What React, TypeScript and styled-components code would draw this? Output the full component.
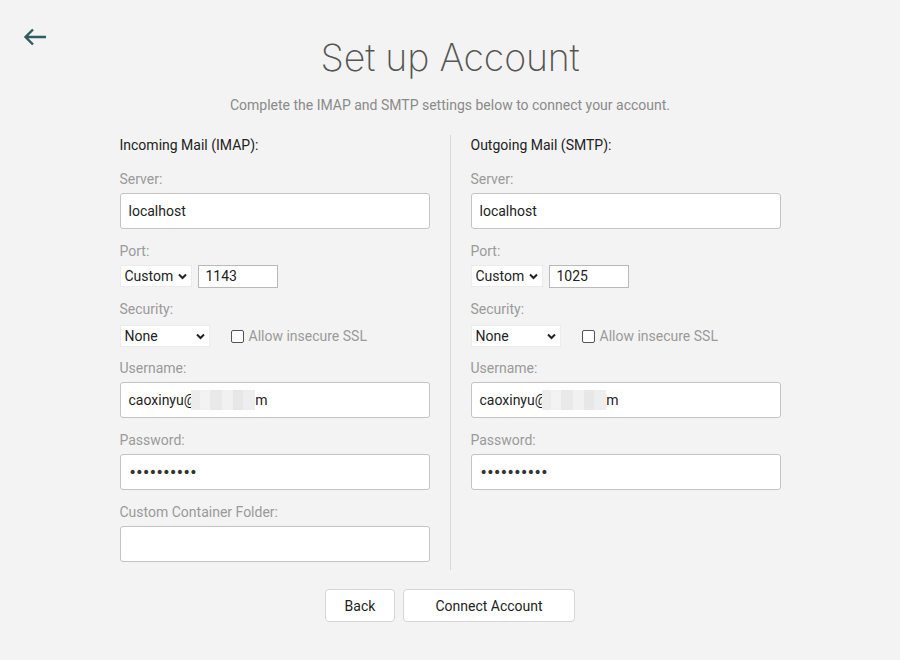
import React from "react";
import styled, { createGlobalStyle } from "styled-components";

const Global = createGlobalStyle`
  html, body { margin: 0; padding: 0; background: #f3f3f3; }
  body { font-family: Roboto, "Liberation Sans", sans-serif; -webkit-font-smoothing: antialiased; }
  * { box-sizing: border-box; }
`;

const Page = styled.div`
  position: relative;
  width: 900px;
  height: 660px;
  background: #f3f3f3;
  display: flex;
  flex-direction: column;
  align-items: center;
`;

const BackArrow = styled.button`
  position: absolute;
  left: 21px;
  top: 26px;
  width: 28px;
  height: 22px;
  padding: 0;
  border: 0;
  background: transparent;
  display: flex;
  align-items: center;
  justify-content: center;
  cursor: pointer;
`;

const Title = styled.h1`
  margin: 36px 0 0;
  font-family: Inter, Roboto, sans-serif;
  font-weight: 200;
  font-size: 37.5px;
  line-height: 44px;
  color: #555;
  letter-spacing: -0.2px;
`;

const Subtitle = styled.p`
  margin: 15px 0 0;
  font-size: 14px;
  line-height: 20px;
  color: #8a8a8a;
`;

const Columns = styled.div`
  margin-top: 20px;
  display: flex;
`;

const Column = styled.div<{ $side: "left" | "right" }>`
  width: ${(p) => (p.$side === "left" ? 331 : 330)}px;
  padding: ${(p) => (p.$side === "left" ? "0 21px 8px 0" : "0 0 8px 20px")};
  border-right: ${(p) => (p.$side === "left" ? "1px solid #d9d9d9" : "none")};
  display: flex;
  flex-direction: column;
`;

const Heading = styled.div`
  font-size: 14px;
  line-height: 20px;
  color: #222;
  margin-bottom: 2px;
`;

const Field = styled.div<{ $mt?: number }>`
  margin-top: ${(p) => p.$mt ?? 12}px;
  display: flex;
  flex-direction: column;
`;

const Label = styled.label`
  font-size: 14px;
  line-height: 20px;
  color: #9a9a9a;
  margin-bottom: 4px;
`;

const TextInput = styled.input`
  width: 310px;
  height: 36px;
  padding: 0 8px;
  border: 1px solid #c4c4c4;
  border-radius: 3px;
  background: #fff;
  font-family: Roboto, "Liberation Sans", sans-serif;
  font-size: 14px;
  color: #222;
  outline: none;
  &[type="password"] {
    font-family: "DejaVu Sans", sans-serif;
    font-size: 14px;
    letter-spacing: -1.5px;
    color: #333;
  }
`;

const UserBox = styled.div`
  width: 310px;
  height: 36px;
  padding: 0 8px;
  border: 1px solid #c4c4c4;
  border-radius: 3px;
  background: #fff;
  font-size: 14px;
  color: #222;
  display: flex;
  align-items: center;
`;

const Redacted = styled.span`
  display: inline-block;
  width: 64px;
  height: 20px;
  margin-left: -5px;
  background: linear-gradient(
    90deg,
    #ececec 0 14%,
    #f3f3f3 14% 30%,
    #e9e9e9 30% 48%,
    #f1f1f1 48% 66%,
    #e7e7e7 66% 82%,
    #eeeeee 82% 100%
  );
`;

const Row = styled.div<{ $gap: number; $mt?: number }>`
  display: flex;
  align-items: center;
  gap: ${(p) => p.$gap}px;
  height: 22px;
  margin-top: ${(p) => p.$mt ?? 0}px;
`;

const SelectWrap = styled.div<{ $w: number }>`
  position: relative;
  width: ${(p) => p.$w}px;
  height: 22px;
`;

const Select = styled.select`
  appearance: none;
  -webkit-appearance: none;
  width: 100%;
  height: 100%;
  border: 1px solid #ececec;
  border-radius: 0;
  background: #fff;
  padding: 0 0 0 4px;
  font-family: Roboto, "Liberation Sans", sans-serif;
  font-size: 14px;
  color: #222;
  outline: none;
`;

const Chevron = styled.svg`
  position: absolute;
  right: 5px;
  top: 8px;
  pointer-events: none;
`;

const PortInput = styled.input`
  width: 80px;
  height: 23px;
  padding: 0 7px;
  border: 1px solid #b9b9b9;
  border-radius: 0;
  background: #fff;
  font-family: Roboto, "Liberation Sans", sans-serif;
  font-size: 14px;
  color: #222;
  outline: none;
`;

const CheckLabel = styled.label`
  display: flex;
  align-items: center;
  gap: 5px;
  font-size: 14px;
  color: #9a9a9a;
`;

const Check = styled.input`
  appearance: none;
  -webkit-appearance: none;
  width: 13px;
  height: 13px;
  margin: 0;
  border: 1px solid #555;
  border-radius: 2px;
  background: #fff;
`;

const Buttons = styled.div`
  margin-top: 19px;
  display: flex;
  gap: 8px;
`;

const Button = styled.button<{ $w: number }>`
  width: ${(p) => p.$w}px;
  height: 33px;
  border: 1px solid #d6d6d6;
  border-radius: 4px;
  background: #fff;
  font-family: Roboto, "Liberation Sans", sans-serif;
  font-size: 14px;
  color: #222;
  cursor: pointer;
`;

const ChevronIcon = () => (
  <Chevron width="9" height="7" viewBox="0 0 9 7">
    <path d="M1 1.5 L4.5 5 L8 1.5" fill="none" stroke="#222" strokeWidth="2" />
  </Chevron>
);

type ColProps = {
  side: "left" | "right";
  title: string;
  port: string;
  showFolder?: boolean;
};

const MailColumn = ({ side, title, port, showFolder }: ColProps) => (
  <Column $side={side}>
    <Heading>{title}</Heading>
    <Field>
      <Label>Server:</Label>
      <TextInput defaultValue="localhost" />
    </Field>
    <Field>
      <Label>Port:</Label>
      <Row $gap={6}>
        <SelectWrap $w={72}>
          <Select defaultValue="custom">
            <option value="custom">Custom</option>
          </Select>
          <ChevronIcon />
        </SelectWrap>
        <PortInput defaultValue={port} />
      </Row>
    </Field>
    <Field>
      <Label>Security:</Label>
      <Row $gap={21} $mt={2}>
        <SelectWrap $w={90}>
          <Select defaultValue="none">
            <option value="none">None</option>
          </Select>
          <ChevronIcon />
        </SelectWrap>
        <CheckLabel>
          <Check type="checkbox" />
          Allow insecure SSL
        </CheckLabel>
      </Row>
    </Field>
    <Field $mt={11}>
      <Label>Username:</Label>
      <UserBox>
        caoxinyu@
        <Redacted />m
      </UserBox>
    </Field>
    <Field>
      <Label>Password:</Label>
      <TextInput type="password" defaultValue="1234567890" />
    </Field>
    {showFolder && (
      <Field>
        <Label>Custom Container Folder:</Label>
        <TextInput defaultValue="" />
      </Field>
    )}
  </Column>
);

export default function App() {
  return (
    <>
      <Global />
      <Page>
        <BackArrow aria-label="Back">
          <svg width="24" height="18" viewBox="0 0 24 18">
            <path
              d="M23 9 H3 M10 1.5 L2.5 9 L10 16.5"
              fill="none"
              stroke="#2f5c5c"
              strokeWidth="2.4"
            />
          </svg>
        </BackArrow>
        <Title>Set up Account</Title>
        <Subtitle>Complete the IMAP and SMTP settings below to connect your account.</Subtitle>
        <Columns>
          <MailColumn side="left" title="Incoming Mail (IMAP):" port="1143" showFolder />
          <MailColumn side="right" title="Outgoing Mail (SMTP):" port="1025" />
        </Columns>
        <Buttons>
          <Button $w={70}>Back</Button>
          <Button $w={172}>Connect Account</Button>
        </Buttons>
      </Page>
    </>
  );
}
